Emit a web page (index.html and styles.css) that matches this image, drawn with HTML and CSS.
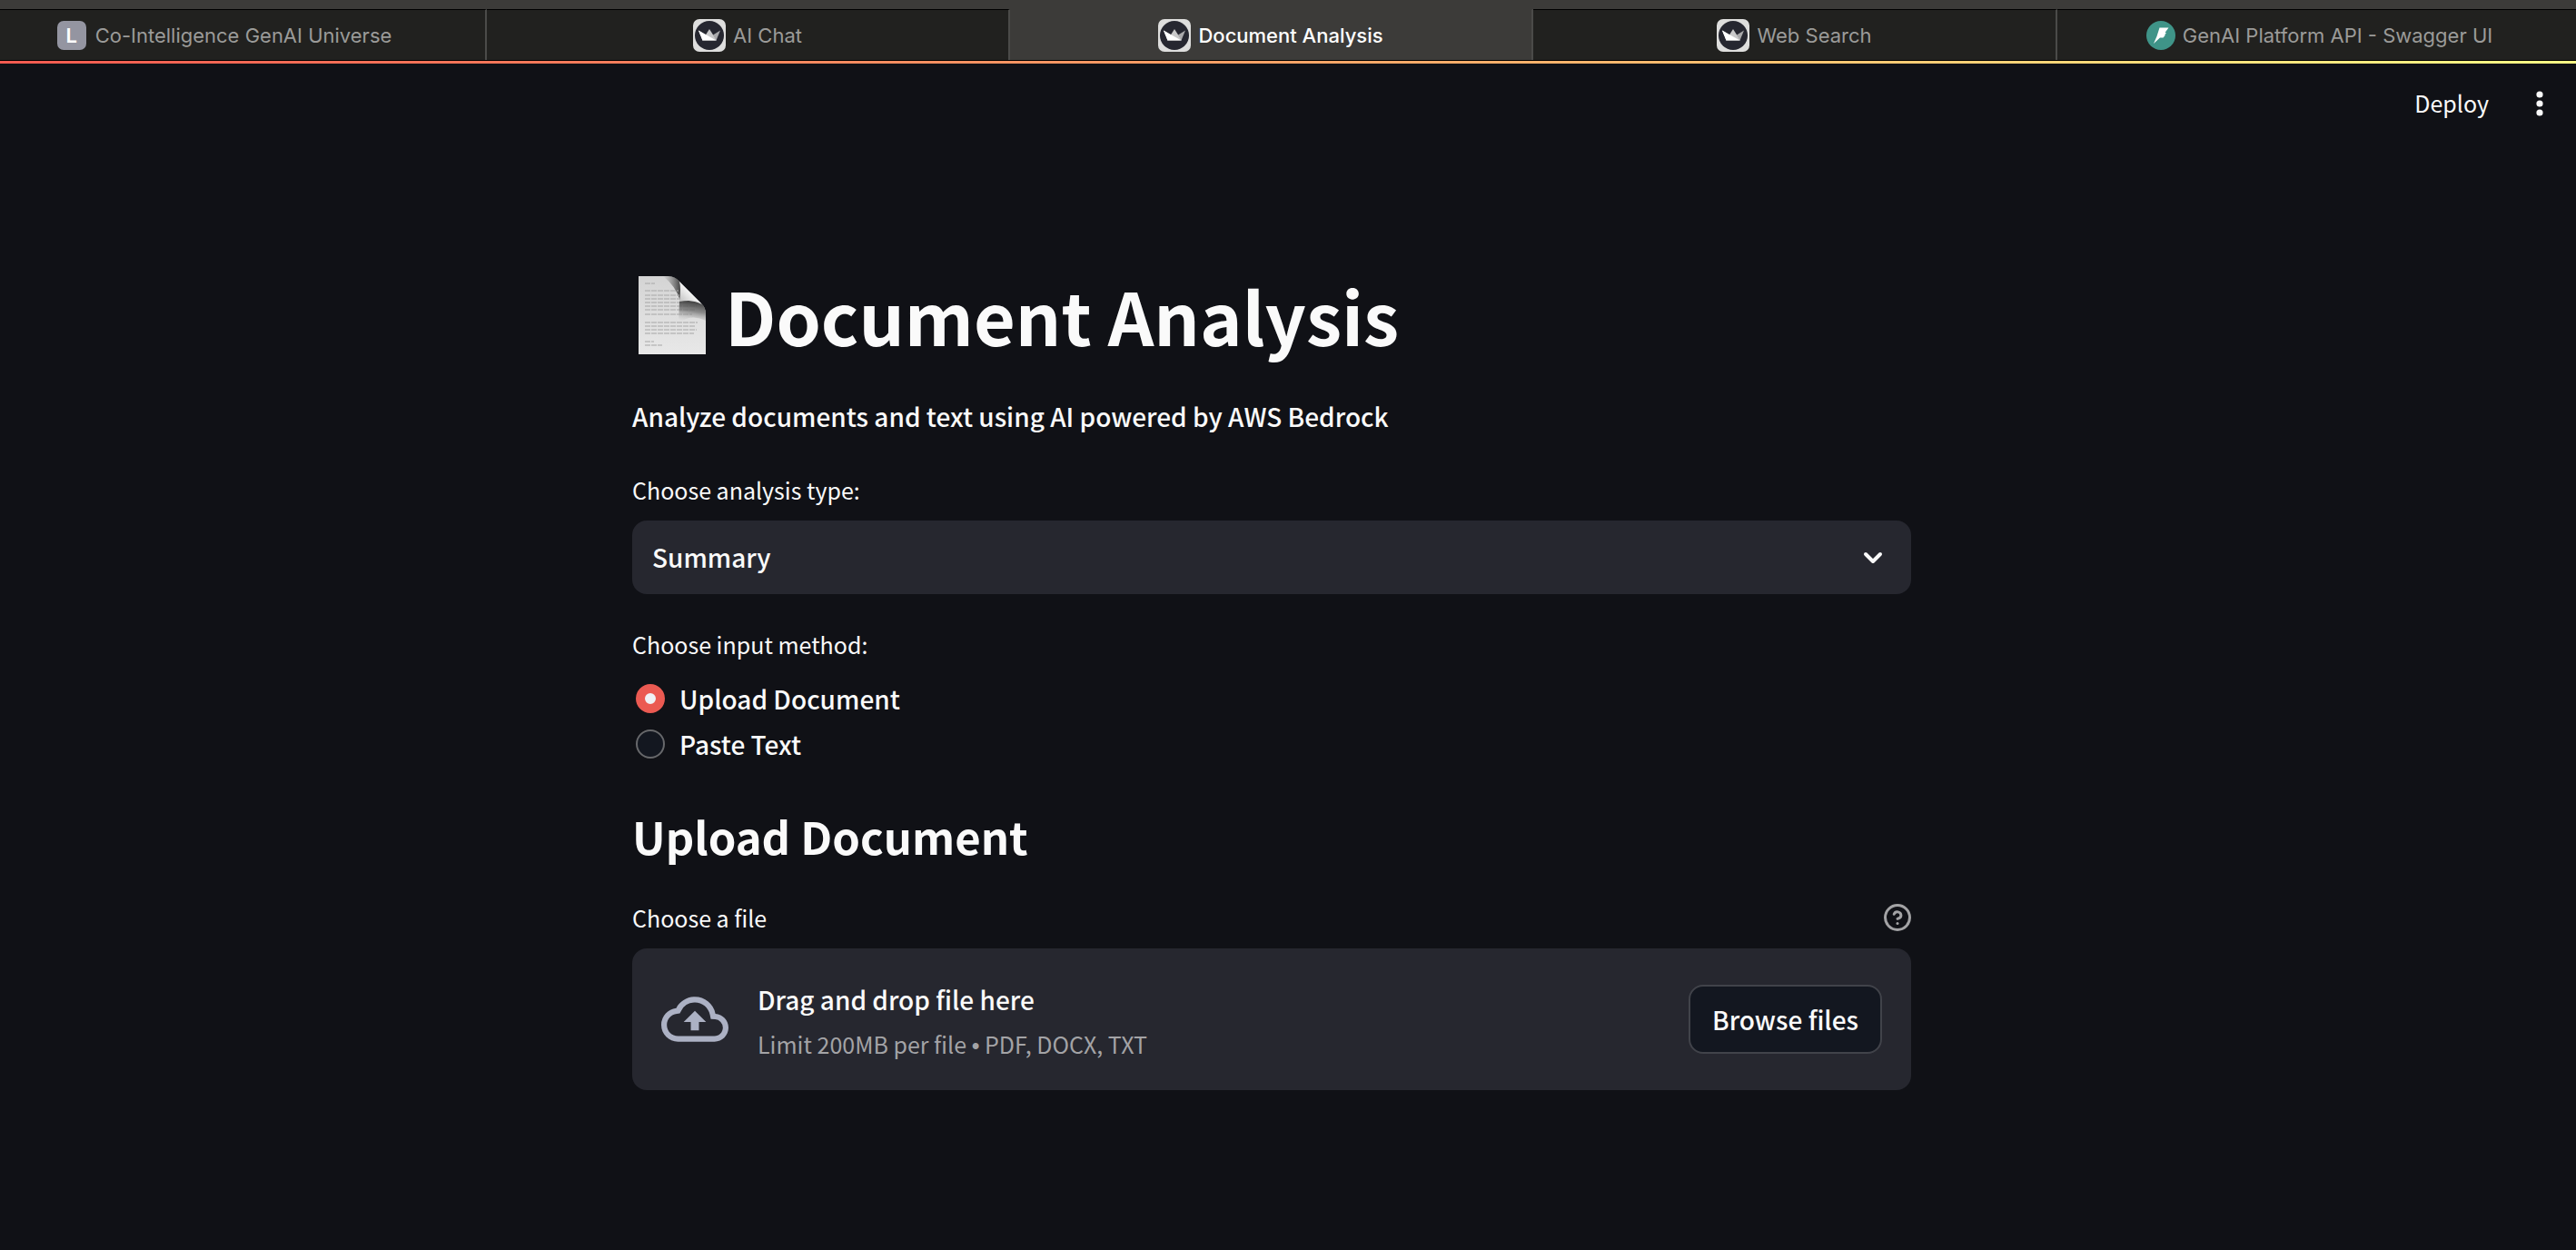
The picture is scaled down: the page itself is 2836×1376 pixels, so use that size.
FILE: index.html
```html
<!DOCTYPE html>
<html lang="en">
<head>
<meta charset="utf-8">
<meta name="viewport" content="width=device-width, initial-scale=1">
<title>Document Analysis</title>
<link rel="stylesheet" href="styles.css">
</head>
<body>
<svg class="defs" aria-hidden="true">
  <defs>
    <symbol id="crown" viewBox="0 0 36 36">
      <rect width="36" height="36" rx="7" fill="#dededd"/>
      <circle cx="18" cy="18" r="16" fill="#262730"/>
      <path d="M6 12.500 L14 17.500 L10.500 23.500 Z" fill="#fff"/>
      <path d="M30 12.500 L22 17.500 L25.500 23.500 Z" fill="#a9a9ab"/>
      <path d="M18 11 L26 23.500 H10 Z" fill="#c9c9ca"/>
      <path d="M6 12.500 L25.500 23.500 H10.500 Z" fill="#fff"/>
    </symbol>
  </defs>
</svg>

<nav class="tabs" aria-label="Tabs">
  <a class="tab tab-first" href="#"><span class="letter">L</span>Co-Intelligence GenAI Universe</a>
  <a class="tab" href="#"><svg class="favicon"><use href="#crown"/></svg>AI Chat</a>
  <a class="tab tab-active" href="#" aria-current="page"><svg class="favicon"><use href="#crown"/></svg>Document Analysis</a>
  <a class="tab" href="#"><svg class="favicon"><use href="#crown"/></svg>Web Search</a>
  <a class="tab" href="#"><svg class="bolt" viewBox="0 0 32 32"><circle cx="16" cy="16" r="16" fill="#3f9488"/><path d="M14.500 7.500 H24.500 L20.500 13 H22 L20 15.500 H21 L18.500 18.500 H15 L8 25 L11.500 17 Z" fill="#fff"/></svg>GenAI Platform API - Swagger UI</a>
</nav>
<div class="decoration"></div>

<header class="toolbar">
  <button class="deploy" type="button">Deploy</button>
  <button class="menu" type="button" aria-label="Main menu"><svg viewBox="0 0 8 28" width="8" height="28" fill="#fafafa"><circle cx="4" cy="4" r="3.600"/><circle cx="4" cy="14" r="3.600"/><circle cx="4" cy="24" r="3.600"/></svg></button>
</header>

<main class="content">
  <h1 class="title">
    <svg class="page-icon" viewBox="0 0 76 88" aria-hidden="true">
      <defs>
        <linearGradient id="paper" x1="0" y1="0" x2="0" y2="1"><stop offset="0" stop-color="#d4d4d4"/><stop offset="1" stop-color="#e8e8e8"/></linearGradient>
        <linearGradient id="shade" x1="0.700" y1="0" x2="0.500" y2="1"><stop offset="0" stop-color="#333"/><stop offset="0.500" stop-color="#666" stop-opacity="0.700"/><stop offset="1" stop-color="#bbb" stop-opacity="0"/></linearGradient>
        <linearGradient id="edge" x1="0" y1="0" x2="1" y2="0"><stop offset="0" stop-color="#777" stop-opacity="0"/><stop offset="1" stop-color="#444"/></linearGradient>
        <linearGradient id="curl" x1="0" y1="1" x2="1" y2="0"><stop offset="0" stop-color="#bbb"/><stop offset="0.500" stop-color="#f4f4f4"/><stop offset="1" stop-color="#ddd"/></linearGradient>
      </defs>
      <path d="M1 1 H34 Q41 1 47 8 L70 31 Q75 36 75 42 V87 H1 Z" fill="url(#paper)"/>
      <path d="M28 1 H35 Q44 2 47 9 V28 Q42 12 28 1 Z" fill="url(#edge)"/>
      <path d="M8 9 H19 M8 17 H45 M8 22 H46 M8 26 H46 M8 30 H60 M8 34 H65 M8 38 H64 M8 43 H60 M8 52 H66 M8 56 H63 M8 60 H65 M8 64 H62 M8 73 H18 M8 77 H27" stroke="#aaa" stroke-width="1.300" stroke-dasharray="6 1" opacity="0.700"/>
      <path d="M46 28 Q64 27 72 33 Q75 37 75 43 V50 Q60 42 45 52 Z" fill="url(#shade)"/>
      <path d="M46 7 Q48 14 46 29 Q60 26 70 31 Z" fill="url(#curl)"/>
    </svg>
    Document Analysis
  </h1>
  <p class="intro">Analyze documents and text using AI powered by AWS Bedrock</p>

  <label class="label" for="analysis">Choose analysis type:</label>
  <div class="select-wrap">
    <select class="select" id="analysis"><option>Summary</option></select>
    <svg class="chevron" viewBox="0 0 22 14" width="22" height="14" fill="none" stroke="#fafafa" stroke-width="4" stroke-linecap="round" stroke-linejoin="round"><path d="M3 3 L11 11 L19 3"/></svg>
  </div>

  <fieldset class="methods">
    <legend class="label">Choose input method:</legend>
    <label class="option"><input class="radio" type="radio" name="method" checked>Upload Document</label>
    <label class="option"><input class="radio" type="radio" name="method">Paste Text</label>
  </fieldset>

  <h2 class="subtitle">Upload Document</h2>

  <div class="label-row">
    <label class="label" for="file">Choose a file</label>
    <button class="help" type="button" aria-label="Help"><svg viewBox="0 0 30 30" width="30" height="30" fill="none" stroke="#a3a3a5" stroke-width="3" stroke-linecap="round" stroke-linejoin="round"><circle cx="15" cy="15" r="13.500"/><path d="M11.200 11.300 a4 4 0 0 1 7.700 1.400 c0 2.600 -3.900 3.700 -3.900 3.700"/><path d="M15 21.500 h0.010"/></svg></button>
  </div>
  <section class="dropzone">
    <svg class="cloud" viewBox="0 0 24 24" fill="#acb1c4" aria-hidden="true"><path d="M19.350 10.040A7.490 7.490 0 0 0 12 4C9.110 4 6.600 5.640 5.350 8.040A5.994 5.994 0 0 0 0 14c0 3.310 2.690 6 6 6h13c2.760 0 5-2.240 5-5 0-2.640-2.050-4.780-4.650-4.960zM19 18H6c-2.210 0-4-1.790-4-4 0-2.050 1.530-3.760 3.560-3.970l1.070-.110.500-.950A5.469 5.469 0 0 1 12 6c2.620 0 4.880 1.860 5.390 4.430l.300 1.500 1.530.110A2.980 2.980 0 0 1 22 15c0 1.650-1.350 3-3 3zM8 13h2.550v3h2.900v-3H16l-4-4z"/></svg>
    <div class="hint">
      <span class="hint-main">Drag and drop file here</span>
      <span class="hint-limit">Limit 200MB per file <span class="bullet">•</span> PDF, DOCX, TXT</span>
    </div>
    <input class="file" id="file" type="file" accept=".pdf,.docx,.txt" hidden>
    <button class="browse" type="button">Browse files</button>
  </section>
</main>
</body>
</html>
```

FILE: styles.css
```css
* { box-sizing: border-box; }

body {
  margin: 0;
  min-height: 100vh;
  background: #101116;
  color: #fafafa;
  font: 500 28px/50px "Noto Sans CJK SC", "Noto Sans", sans-serif;
}

button, select { font: inherit; color: inherit; }
button { padding: 0; border: 0; background: none; }
svg { display: block; flex: none; }
.defs { position: absolute; width: 0; height: 0; }

/* Tab strip */
.tabs {
  display: grid;
  grid-template-columns: 536fr 576fr 576fr 577fr 571fr;
  padding-top: 10px;
  background: #3c3b39;
  border-bottom: 1px solid #000;
}
.tab {
  display: flex;
  align-items: center;
  justify-content: center;
  gap: 8px;
  height: 56px;
  padding-top: 1px;
  border-top: 1px solid #000;
  border-right: 2px solid #4b4b49;
  background: #21211f;
  color: #9b9b99;
  font: 400 22px/28px Inter, "Liberation Sans", sans-serif;
  text-decoration: none;
  white-space: nowrap;
}
.tab:last-child { padding-left: 6px; border-right: 0; }
.tab-first { padding-right: 40px; }
.tab-active {
  border-top-color: #3c3b39;
  background: #3c3b39;
  color: #fff;
  font-weight: 500;
}
.favicon { width: 36px; height: 36px; }
.bolt { width: 32px; height: 32px; }
.letter {
  width: 32px;
  height: 32px;
  margin-right: 2px;
  border-radius: 7px;
  background: #9495a1;
  color: #fff;
  font-weight: 600;
  line-height: 32px;
  text-align: center;
}
.decoration {
  height: 3px;
  background: linear-gradient(90deg, #f25a50, #fab26b 60%, #fdfa85);
}

/* App toolbar */
.toolbar {
  display: flex;
  align-items: center;
  justify-content: flex-end;
  gap: 52px;
  height: 88px;
  padding-right: 36px;
}
.deploy { padding-bottom: 2px; font-size: 25px; font-weight: 400; line-height: 42px; }

/* Main column */
.content {
  max-width: 1408px;
  margin: 136px auto 0;
  position: relative;
  right: 18px;
}
.title {
  display: flex;
  align-items: center;
  gap: 20px;
  margin: 0;
  padding-left: 6px;
  font-size: 79px;
  font-weight: 700;
  line-height: 106px;
}
.page-icon { width: 76px; height: 88px; }
.intro { margin: 33px 0 34px; }
.label { display: block; padding: 0; font-size: 25px; font-weight: 400; line-height: 44px; }

.select-wrap { display: grid; align-items: center; margin-top: 12px; }
.select {
  grid-area: 1 / 1;
  width: 100%;
  height: 81px;
  padding: 0 22px 2px;
  appearance: none;
  border: 0;
  border-radius: 16px;
  background: #26272f;
}
.chevron { grid-area: 1 / 1; justify-self: end; margin-right: 31px; pointer-events: none; }

.methods { margin: 33px 0 0; padding: 0; border: 0; }
.methods .label { margin-bottom: 13px; }
.option { display: flex; align-items: center; gap: 16px; height: 50px; padding-left: 4px; line-height: 48px; }
.radio {
  width: 32px;
  height: 32px;
  margin: 0;
  appearance: none;
  border: 2px solid #67686b;
  border-radius: 50%;
  background: #131720;
}
.radio:checked { border: 10px solid #eb5a52; background: #f0f2f6; }

.subtitle { margin: 42px 0 34px; font-size: 49px; font-weight: 700; line-height: 68px; }

.label-row { display: flex; align-items: center; justify-content: space-between; }
.dropzone {
  display: flex;
  align-items: center;
  height: 156px;
  margin-top: 12px;
  padding: 0 32px;
  border-radius: 16px;
  background: #26272f;
}
.cloud { width: 74px; height: 74px; }
.hint { display: flex; flex: 1; flex-direction: column; margin-left: 32px; padding-top: 5px; }
.hint-limit { color: #a3a3a6; font-size: 25px; font-weight: 400; line-height: 48px; }
.bullet { font-family: "Liberation Sans", sans-serif; }
.browse {
  height: 76px;
  padding: 0 24px;
  border: 2px solid #41434a;
  border-radius: 16px;
  background: #131720;
}
```
